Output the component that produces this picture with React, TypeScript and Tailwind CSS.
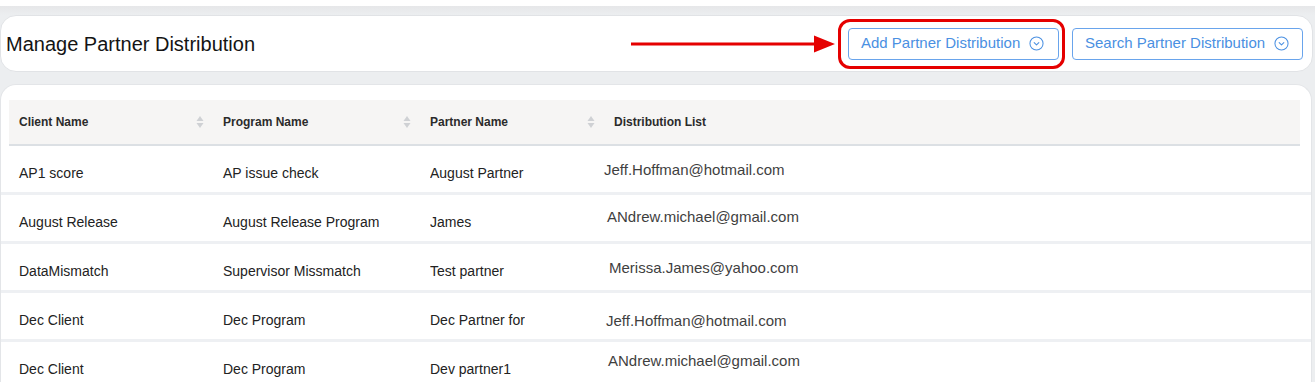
import React from "react";

type Row = {
  client: string;
  program: string;
  partner: string;
  email: string;
  emailClass: string;
};

const rows: Row[] = [
  { client: "AP1 score", program: "AP issue check", partner: "August Partner", email: "Jeff.Hoffman@hotmail.com", emailClass: "ml-0 -mt-[4px]" },
  { client: "August Release", program: "August Release Program", partner: "James", email: "ANdrew.michael@gmail.com", emailClass: "ml-[3px] -mt-[6px]" },
  { client: "DataMismatch", program: "Supervisor Missmatch", partner: "Test partner", email: "Merissa.James@yahoo.com", emailClass: "ml-[5px] -mt-[4px]" },
  { client: "Dec Client", program: "Dec Program", partner: "Dec Partner for Dec Client", email: "Jeff.Hoffman@hotmail.com", emailClass: "ml-[2px] mt-0" },
  { client: "Dec Client", program: "Dec Program", partner: "Dev partner1", email: "ANdrew.michael@gmail.com", emailClass: "ml-[4px] -mt-[9px]" },
];

function CircleChevron() {
  return (
    <svg width="15" height="15" viewBox="0 0 16 16" fill="none" stroke="#4a90e2" strokeWidth="1.1">
      <circle cx="8" cy="8" r="7" />
      <path d="M5.5 7 L8 9.5 L10.5 7" strokeLinecap="round" strokeLinejoin="round" />
    </svg>
  );
}

function SortIcon() {
  return (
    <svg width="8" height="14" viewBox="0 0 8 14" fill="#cfd1d4">
      <path d="M4 1 L7.5 6 L0.5 6 Z" />
      <path d="M4 13 L7.5 8 L0.5 8 Z" />
    </svg>
  );
}

function HeaderCell({ label, sort }: { label: string; sort?: boolean }) {
  return (
    <div className="flex items-center justify-between pl-[10px] pr-[9px]">
      <span className="text-[12px] font-bold text-[#2b2b2b]">{label}</span>
      {sort && <SortIcon />}
    </div>
  );
}

export default function App() {
  return (
    <div
      className="w-[1315px] h-[382px] overflow-hidden bg-[#eceef0]"
      style={{ fontFamily: "'Liberation Sans', Arial, Helvetica, sans-serif" }}
    >
      {/* top strip */}
      <div className="h-[6px] bg-white" />
      <div className="h-[9px] bg-gradient-to-b from-[#e6e7e9] to-[#eceef0]" />

      {/* page header card */}
      <div className="w-[1313px] h-[57px] bg-white border border-[#e1e3e6] rounded-[16px] flex items-center pl-[5px] pr-[9px]">
        <h1 className="text-[20px] text-[#141414] font-normal">Manage Partner Distribution</h1>
        <div className="flex-1" />
        <svg width="205" height="20" viewBox="0 0 205 20" className="mr-[2px]">
          <rect x="0" y="8.5" width="186" height="3" fill="#e50000" />
          <path d="M183 1.5 L204 10 L183 18.5 Z" fill="#e50000" />
        </svg>
        <div className="border-[3px] border-[#e50000] rounded-[12px] pl-[7px] pr-[3px] py-[6px]">
          <button className="h-[32px] w-[211px] flex items-center justify-between pl-[12px] pr-[14px] border border-[#69a4ec] rounded-[4px] bg-white text-[15px] text-[#4a90e2]">
            <span>Add Partner Distribution</span>
            <CircleChevron />
          </button>
        </div>
        <button className="ml-[7px] h-[32px] w-[231px] flex items-center justify-between pl-[12px] pr-[13px] border border-[#69a4ec] rounded-[4px] bg-white text-[15px] text-[#4a90e2]">
          <span>Search Partner Distribution</span>
          <CircleChevron />
        </button>
      </div>

      {/* table card */}
      <div className="mt-[12px] w-[1312px] h-[300px] bg-white border border-[#e3e5e8] border-b-0 rounded-t-[16px] pt-[15px]">
        <div className="mx-[8px] w-[1291px] h-[46px] bg-[#f6f5f4] border-b-2 border-[#dce0e4] grid grid-cols-[204px_207px_184px_1fr]">
          <HeaderCell label="Client Name" sort />
          <HeaderCell label="Program Name" sort />
          <HeaderCell label="Partner Name" sort />
          <HeaderCell label="Distribution List" />
        </div>

        {rows.map((r, i) => (
          <div
            key={i}
            className="h-[49px] border-b-[3px] border-[#eef0f3] pl-[8px] grid grid-cols-[204px_207px_184px_1fr]"
          >
            <div className="pl-[10px] pt-[17px] text-[14px] text-[#222] whitespace-nowrap">{r.client}</div>
            <div className="pl-[10px] pt-[17px] text-[14px] text-[#222] whitespace-nowrap">{r.program}</div>
            <div className="pl-[10px] pt-[17px] text-[14px] text-[#222]">
              <div className="w-[95px] overflow-hidden whitespace-nowrap">{r.partner}</div>
            </div>
            <div className="pt-[17px]">
              <div className={`text-[15px] text-[#3f3f3f] whitespace-nowrap ${r.emailClass}`}>{r.email}</div>
            </div>
          </div>
        ))}
      </div>
    </div>
  );
}
